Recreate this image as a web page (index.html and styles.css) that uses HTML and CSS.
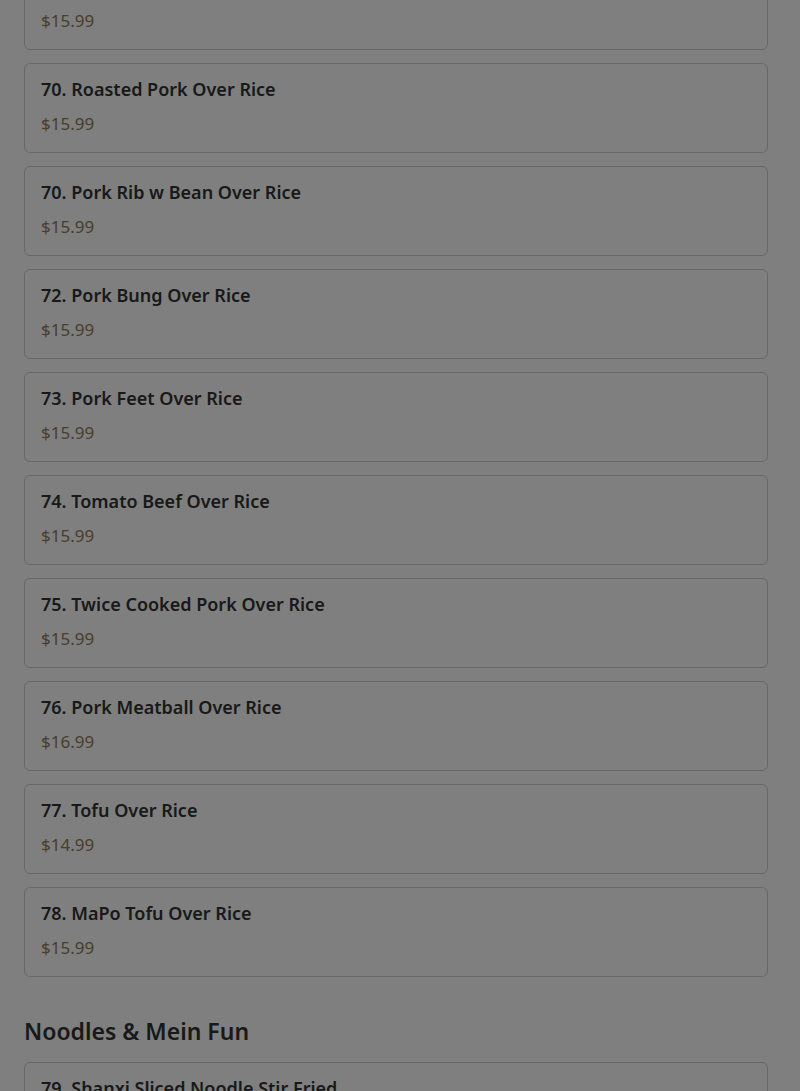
FILE: index.html
```html
<!DOCTYPE html>
<html lang="en">
<head>
<meta charset="utf-8">
<title>Menu</title>
<link rel="stylesheet" href="styles.css">
</head>
<body>
<main class="menu">
  <section class="category">
    <div class="items">
      <div class="item"><h3 class="item-name">69. Pork Over Rice</h3><div class="item-price">$15.99</div></div>
      <div class="item"><h3 class="item-name">70. Roasted Pork Over Rice</h3><div class="item-price">$15.99</div></div>
      <div class="item"><h3 class="item-name">70. Pork Rib w Bean Over Rice</h3><div class="item-price">$15.99</div></div>
      <div class="item"><h3 class="item-name">72. Pork Bung Over Rice</h3><div class="item-price">$15.99</div></div>
      <div class="item"><h3 class="item-name">73. Pork Feet Over Rice</h3><div class="item-price">$15.99</div></div>
      <div class="item"><h3 class="item-name">74. Tomato Beef Over Rice</h3><div class="item-price">$15.99</div></div>
      <div class="item"><h3 class="item-name">75. Twice Cooked Pork Over Rice</h3><div class="item-price">$15.99</div></div>
      <div class="item"><h3 class="item-name">76. Pork Meatball Over Rice</h3><div class="item-price">$16.99</div></div>
      <div class="item"><h3 class="item-name">77. Tofu Over Rice</h3><div class="item-price">$14.99</div></div>
      <div class="item"><h3 class="item-name">78. MaPo Tofu Over Rice</h3><div class="item-price">$15.99</div></div>
    </div>
  </section>
  <section class="category">
    <h2 class="category-title">Noodles &amp; Mein Fun</h2>
    <div class="items">
      <div class="item"><h3 class="item-name">79. Shanxi Sliced Noodle Stir Fried</h3><div class="item-price">$15.99</div></div>
      <div class="item"><h3 class="item-name">80. Beef Chow Fun</h3><div class="item-price">$15.99</div></div>
    </div>
  </section>
</main>
<div class="backdrop"></div>
</body>
</html>
```
FILE: styles.css
```css
html, body {
  margin: 0;
  padding: 0;
  background: #ffffff;
  overflow: hidden;
  height: 1091px;
}
body {
  font-family: "Noto Sans", "Open Sans", sans-serif;
  color: #333333;
}
.menu {
  padding: 0 32px 0 24px;
  margin-top: -40px;
}
.items {
  display: flex;
  flex-direction: column;
  gap: 13px;
}
.item {
  border: 1px solid #cecece;
  border-radius: 6px;
  padding: 14px 16px 18px;
  background: #ffffff;
}
.item-name {
  margin: 0 0 14px;
  font-size: 18px;
  line-height: 22px;
  font-weight: 600;
  color: #333333;
}
.item-price {
  font-size: 17px;
  line-height: 20px;
  color: #937a58;
}
.category-title {
  margin: 38px 0 15px;
  font-size: 23px;
  line-height: 32px;
  font-weight: 600;
  color: #333333;
}
.backdrop {
  position: fixed;
  inset: 0;
  background: rgba(0, 0, 0, 0.5);
}
```
